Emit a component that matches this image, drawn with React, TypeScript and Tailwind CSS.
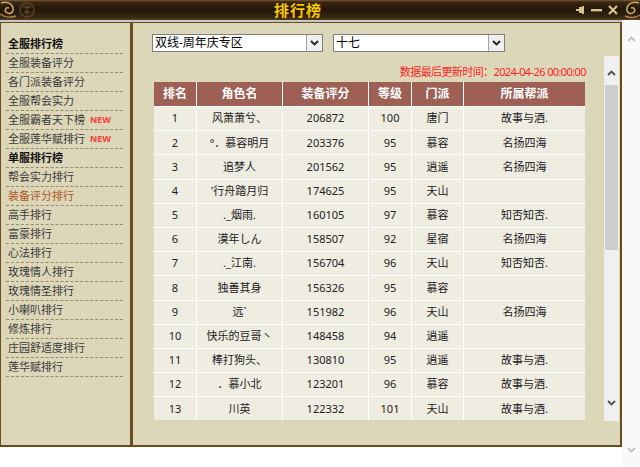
import React from 'react';

const side = [
  { t: '全服排行榜', b: true },
  { t: '全服装备评分' },
  { t: '各门派装备评分' },
  { t: '全服帮会实力' },
  { t: '全服霸者天下榜', nw: true },
  { t: '全服莲华赋排行', nw: true },
  { t: '单服排行榜', b: true },
  { t: '帮会实力排行' },
  { t: '装备评分排行', a: true },
  { t: '高手排行' },
  { t: '富豪排行' },
  { t: '心法排行' },
  { t: '玫瑰情人排行' },
  { t: '玫瑰情圣排行' },
  { t: '小喇叭排行' },
  { t: '修炼排行' },
  { t: '庄园舒适度排行' },
  { t: '莲华赋排行' },
];

const rows = [
  ['1', '风萧萧兮、', '206872', '100', '唐门', '故事与酒.'],
  ['2', '°．慕容明月', '203376', '95', '慕容', '名扬四海'],
  ['3', '追梦人', '201562', '95', '逍遥', '名扬四海'],
  ['4', '\'行舟踏月归', '174625', '95', '天山', ''],
  ['5', '._烟雨.', '160105', '97', '慕容', '知否知否.'],
  ['6', '漠年しん', '158507', '92', '星宿', '名扬四海'],
  ['7', '._江南.', '156704', '96', '天山', '知否知否.'],
  ['8', '独善其身', '156326', '95', '慕容', ''],
  ['9', '远`', '151982', '96', '天山', '名扬四海'],
  ['10', '快乐的豆哥丶', '148458', '94', '逍遥', ''],
  ['11', '棒打狗头、', '130810', '95', '逍遥', '故事与酒.'],
  ['12', '．慕小北', '123201', '96', '慕容', '故事与酒.'],
  ['13', '川英', '122332', '101', '天山', '故事与酒.'],
];

const heads = ['排名', '角色名', '装备评分', '等级', '门派', '所属帮派'];

function Chevron({ up, color, w = 9 }: { up?: boolean; color: string; w?: number }) {
  return (
    <svg width={w} height={6} viewBox="0 0 9 6">
      <path d={up ? 'M1 5 L4.5 1.5 L8 5' : 'M1 1 L4.5 4.5 L8 1'} fill="none" stroke={color} strokeWidth={1.8} />
    </svg>
  );
}

function Select({ label, w }: { label: string; w: string }) {
  return (
    <div className={`${w} h-[18px] bg-white border border-[#7f7f7f] flex items-center`}>
      <div className="flex-1 pl-[2px] text-[12px] leading-[16px] text-black truncate">{label}</div>
      <div className="w-[16px] h-[16px] bg-[#f0f0f0] border-l border-[#a0a0a0] flex items-center justify-center">
        <Chevron color="#202020" />
      </div>
    </div>
  );
}

export default function App() {
  return (
    <div className="w-[640px] h-[467px] bg-white flex flex-col overflow-hidden font-['Noto_Sans','Noto_Sans_CJK_SC',sans-serif]">
      {/* Title bar */}
      <div className="h-[20px] w-[640px] flex items-center relative bg-[linear-gradient(#7a5a30_0px,#3a2712_2px,#22160a_10px,#3b2913_18px,#5a4424_20px)]">
        <svg className="absolute left-0 top-0" width="40" height="22" viewBox="0 0 40 22">
          <path d="M1 3 C6 1 12 3 13 8 C14 13 9 15 6 12 C4 10 6 7 9 8" fill="none" stroke="#c9a866" strokeWidth="1.6" />
          <path d="M0 14 C4 17 10 18 16 16" fill="none" stroke="#a8884c" strokeWidth="1.4" />
          <circle cx="27" cy="10" r="7" fill="none" stroke="#5c4123" strokeWidth="1.5" />
          <path d="M23 7 H31 M27 5 V15 M24 12 H30" stroke="#5c4123" strokeWidth="1.3" />
        </svg>
        <div className="ml-[274px] text-[15px] font-bold leading-[20px] text-[#f7c800] tracking-[1px] [text-shadow:0_0_2px_#3a2000]">排行榜</div>
        <div className="flex-1" />
        <svg width="9" height="8" viewBox="0 0 9 8" className="mr-[6px]">
          <rect x="0" y="3" width="3" height="2" fill="#d9c28c" />
          <rect x="3" y="1" width="3" height="6" fill="#d9c28c" />
          <rect x="6" y="0" width="2" height="8" fill="#d9c28c" />
        </svg>
        <svg width="11" height="3" viewBox="0 0 11 3" className="mr-[6px]">
          <rect x="0" y="0" width="11" height="2.4" fill="#d9c28c" />
        </svg>
        <svg width="10" height="10" viewBox="0 0 10 10" className="mr-[4px]">
          <path d="M1 1 L9 9 M9 1 L1 9" stroke="#d9c28c" strokeWidth="2.2" />
        </svg>
        <svg width="18" height="22" viewBox="0 0 18 22" className="self-start">
          <path d="M17 3 C12 1 6 3 5 8 C4 13 9 15 12 12 C14 10 12 7 9 8" fill="none" stroke="#c9a866" strokeWidth="1.6" />
          <path d="M18 15 C14 18 8 18 3 16" fill="none" stroke="#a8884c" strokeWidth="1.4" />
        </svg>
      </div>

      <div className="flex flex-1">
        <div className="w-[622px] flex flex-col">
          <div className="h-[2px] bg-[#c5c8c6]" />
          <div className="h-[425px] flex bg-[#ddd7ba] border-t border-b-2 border-l border-r-2 border-[#6b4a1c]">
            {/* Sidebar */}
            <div className="w-[132px] shrink-0 border-r-[3px] border-[#6e4d20] pt-[12px] pl-[5px] pr-[7px]">
              {side.map((s) => (
                <div
                  key={s.t}
                  className="h-[19px] border-b border-dashed border-[#968c6c] flex items-center pl-[2px] text-[11px] leading-[18px]"
                >
                  <span
                    className={
                      s.b ? 'font-bold text-[#111]' : s.a ? 'text-[#b0551e]' : 'text-[#3a3a38]'
                    }
                  >
                    {s.t}
                  </span>
                  {s.nw && (
                    <span className="ml-[5px] text-[9px] font-bold text-[#ff3c3c]">NEW</span>
                  )}
                </div>
              ))}
            </div>

            {/* Main */}
            <div className="flex-1 pl-[19px] pt-[11px] flex flex-col">
              <div className="flex gap-[10px]">
                <Select label="双线-周年庆专区" w="w-[171px]" />
                <Select label="十七" w="w-[172px]" />
              </div>
              <div className="mt-[4px] h-[365px] flex overflow-hidden">
                <div className="w-[452px] overflow-hidden">
                  <div className="pt-[8px] pr-[18px] h-[24px] text-right text-[11px] leading-[16px] tracking-[-0.6px] text-[#ff1e1e]">
                    数据最后更新时间：2024-04-26 00:00:00
                  </div>
                  <div className="mt-[2px] ml-[2px] w-[431px] grid grid-cols-[42px_85px_85px_42px_51px_121px] gap-[1px] bg-white">
                    {heads.map((h) => (
                      <div
                        key={h}
                        className="h-[24px] bg-[#9e5f55] text-white font-bold text-[12px] flex items-center justify-center"
                      >
                        {h}
                      </div>
                    ))}
                    {rows.map((r) =>
                      r.map((c, i) => (
                        <div
                          key={r[0] + '-' + i}
                          className="h-[23.2px] bg-[#efece2] text-[#222] text-[11px] flex items-center justify-center"
                        >
                          {c}
                        </div>
                      ))
                    )}
                  </div>
                </div>
                {/* inner scrollbar */}
                <div className="w-[15px] h-[365px] bg-[#f0f0f0] flex flex-col">
                  <div className="h-[29px] flex items-center justify-center pt-[4px]">
                    <Chevron up color="#505050" />
                  </div>
                  <div className="mx-[1px] h-[165px] bg-[#cdcdcd]" />
                  <div className="flex-1" />
                  <div className="h-[29px] flex items-center justify-center pb-[8px]">
                    <Chevron color="#505050" />
                  </div>
                </div>
              </div>
            </div>
          </div>
          <div className="flex-1 bg-white" />
        </div>
        {/* outer scrollbar */}
        <div className="w-[18px] bg-[#f9f9f9] flex flex-col items-center">
          <div className="mt-[16px]">
            <Chevron up color="#c2c2c2" w={11} />
          </div>
          <div className="flex-1" />
          <div className="mb-[14px]">
            <Chevron color="#c2c2c2" w={11} />
          </div>
        </div>
      </div>
    </div>
  );
}
